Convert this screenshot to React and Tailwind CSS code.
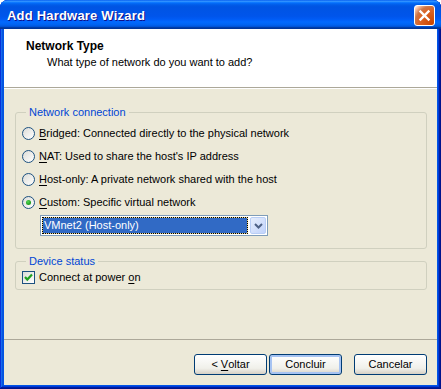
import React from "react";

const U = ({ children }) => (
  <span className="underline underline-offset-[2px] decoration-[1px]">{children}</span>
);

function Radio({ checked, children }) {
  return (
    <div className="flex h-[23px] items-center gap-[4px]">
      <span className="flex h-[13px] w-[13px] shrink-0 items-center justify-center rounded-full border border-[#1C5180] bg-[linear-gradient(135deg,#DCDCD7,#FFFFFF)]">
        {checked && (
          <span className="h-[5px] w-[5px] rounded-full bg-[radial-gradient(circle_at_40%_35%,#55D855,#21A121_60%,#1A8A1A)]" />
        )}
      </span>
      <span className="leading-[13px]">{children}</span>
    </div>
  );
}

function Btn({ children, def }) {
  return (
    <div
      className={
        "flex h-[21px] w-[73px] items-center justify-center whitespace-pre rounded-[3px] border border-[#003C74] bg-[linear-gradient(to_bottom,#FFFFFF,#F0F0EA_70%,#D6D0C5)] " +
        (def ? "shadow-[inset_0_0_0_2px_#A6C3F2]" : "")
      }
    >
      {children}
    </div>
  );
}

export default function App() {
  return (
    <div
      className="flex h-[389px] w-[441px] flex-col rounded-t-[8px] bg-[#0055E5] text-[11px] text-black shadow-[inset_-1px_-1px_#00138C,inset_1px_1px_#0831D9,inset_-2px_-2px_#001EA0,inset_2px_2px_#166AEE,inset_-3px_-3px_#003BDA,inset_3px_3px_#0855DD]"
      style={{ fontFamily: '"Liberation Sans", Arial, sans-serif' }}
    >
      {/* Title bar */}
      <div className="flex h-[29px] shrink-0 items-center rounded-t-[8px] bg-[linear-gradient(to_bottom,#0058EE_0%,#3593FF_4%,#288EFF_6%,#127DFF_8%,#036FFC_10%,#0262EE_14%,#0057E5_20%,#0054E3_24%,#0055EB_56%,#005BF5_66%,#026AFE_76%,#0062EF_86%,#0052D6_92%,#0040AB_94%,#003092_100%)] pl-[7px] pr-[6px]">
        <span className="flex-1 pt-[3px] text-[13px] font-bold tracking-[0.2px] text-white [text-shadow:1px_1px_#0F1089]">
          Add Hardware Wizard
        </span>
        <div className="mt-[1px] flex h-[21px] w-[21px] items-center justify-center rounded-[3px] border border-white bg-[radial-gradient(circle_at_90%_90%,#CC4600_0%,#DC6527_55%,#CD7546_70%,#FFCCB2_90%,white_100%)]">
          <svg width="13" height="13" viewBox="0 0 13 13">
            <path d="M2.5 2.5 L10.5 10.5 M10.5 2.5 L2.5 10.5" stroke="white" strokeWidth="2.4" strokeLinecap="square" />
          </svg>
        </div>
      </div>

      {/* Client area */}
      <div className="mx-[4px] mb-[4px] flex flex-1 flex-col bg-[#ECE9D8]">
        {/* Header */}
        <div className="h-[59px] shrink-0 border-b border-[#ACA899] bg-white pl-[22px] pt-[10px]">
          <div className="text-[12px] font-bold leading-[14px]">Network Type</div>
          <div className="ml-[21px] mt-[3px] leading-[13px]">What type of network do you want to add?</div>
        </div>
        <div className="h-px bg-white" />

        {/* Network connection group */}
        <fieldset className="ml-[11px] mr-[10px] mt-[17px] rounded-[3px] border border-[#D0D0BF] pb-[12px] pl-[6px] pt-[3px]">
          <legend className="ml-[4px] px-[3px] leading-[13px] text-[#0046D5]">Network connection</legend>
          <Radio>
            <U>B</U>ridged: Connected directly to the physical network
          </Radio>
          <Radio>
            <U>N</U>AT: Used to share the host's IP address
          </Radio>
          <Radio>
            <U>H</U>ost-only: A private network shared with the host
          </Radio>
          <Radio checked>
            <U>C</U>ustom: Specific virtual network
          </Radio>
          <div className="ml-[18px] mt-[1px] flex h-[21px] w-[228px] gap-[2px] border border-[#7F9DB9] bg-white p-[1px]">
            <div className="flex-1 bg-[#E8D48C]">
              <div className="flex h-full items-center border border-dotted border-black bg-[#316AC5] bg-clip-padding pl-[1px] leading-[13px] text-white">
                VMnet2 (Host-only)
              </div>
            </div>
            <div className="flex w-[16px] items-center justify-center rounded-[2px] border border-[#B9CEF6] bg-[linear-gradient(135deg,#E6EEFC,#C1D3FB)]">
              <svg width="9" height="6" viewBox="0 0 9 6">
                <path d="M1 1 L4.5 4.5 L8 1" fill="none" stroke="#4D6185" strokeWidth="2" />
              </svg>
            </div>
          </div>
        </fieldset>

        {/* Device status group */}
        <fieldset className="ml-[11px] mr-[10px] mt-[6px] rounded-[3px] border border-[#D0D0BF] pb-[5px] pl-[6px] pt-[2px]">
          <legend className="ml-[4px] px-[3px] leading-[13px] text-[#0046D5]">Device status</legend>
          <div className="flex h-[14px] items-center gap-[4px]">
            <span className="flex h-[13px] w-[13px] shrink-0 items-center justify-center border border-[#1C5180] bg-[linear-gradient(135deg,#DCDCD7,#FFFFFF)]">
              <svg width="11" height="11" viewBox="0 0 11 11">
                <path d="M2 5 L4.3 7.6 L9 2.6" fill="none" stroke="#21A121" strokeWidth="2.2" />
              </svg>
            </span>
            <span className="leading-[13px]">
              Connect at power <U>o</U>n
            </span>
          </div>
        </fieldset>

        {/* Footer */}
        <div className="mt-auto border-t border-[#ACA899]">
          <div className="flex justify-end pb-[10px] pr-[10px] pt-[14px]">
            <Btn>
              {"< "}
              <U>V</U>
              {"oltar"}
            </Btn>
            <div className="ml-[2px]">
              <Btn def>Concluir</Btn>
            </div>
            <div className="ml-[12px]">
              <Btn>Cancelar</Btn>
            </div>
          </div>
        </div>
      </div>
    </div>
  );
}
